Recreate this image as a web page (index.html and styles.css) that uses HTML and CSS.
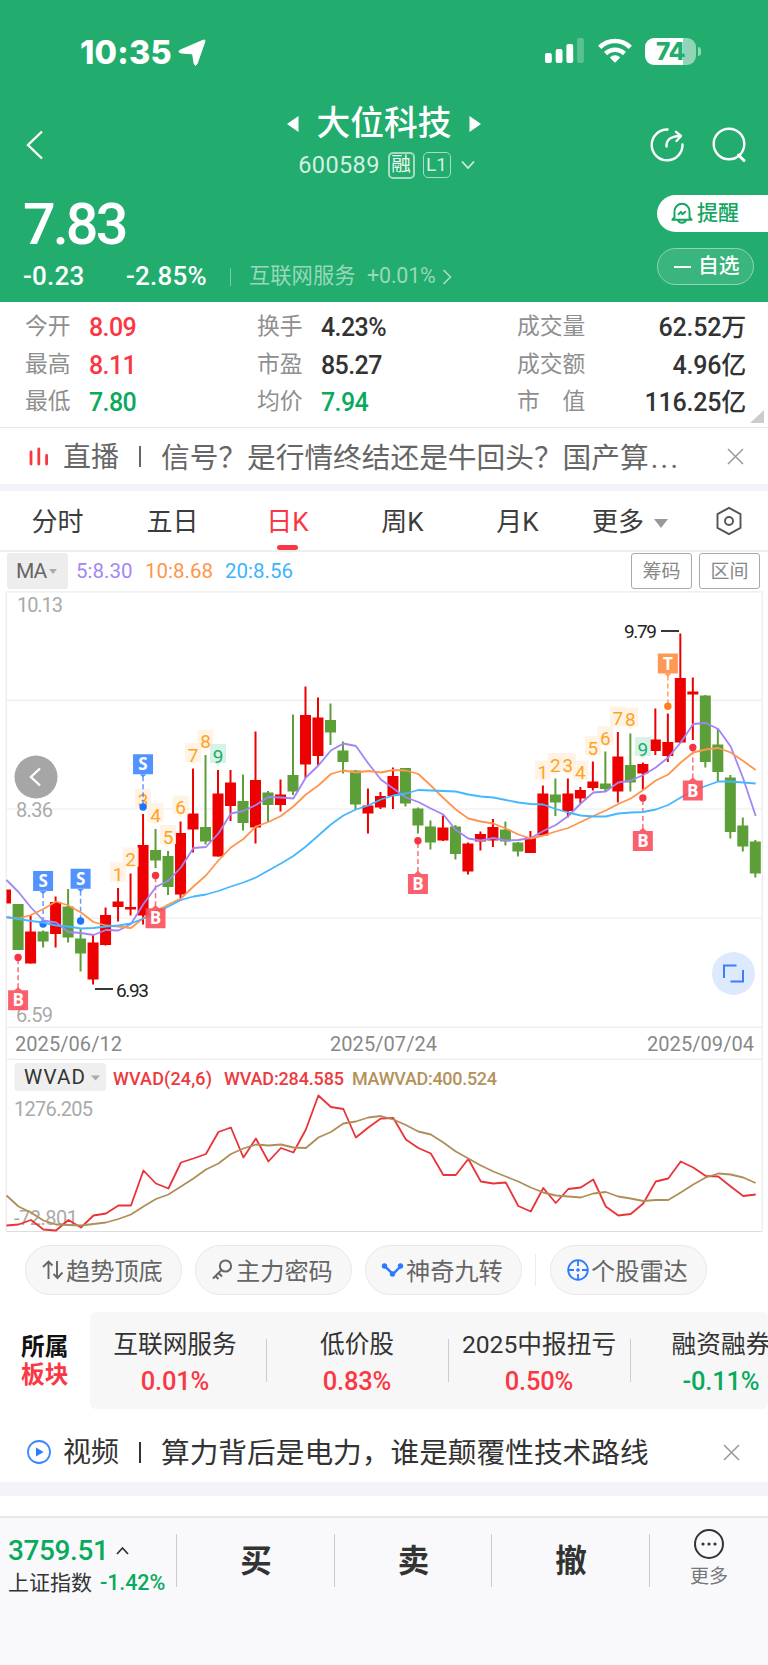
FILE: index.html
```html
<!DOCTYPE html>
<html lang="zh-CN">
<head>
<meta charset="utf-8">
<title>大位科技 600589</title>
<link rel="stylesheet" href="styles.css">
</head>
<body>
<header class="header">
  <div class="status">
    <span class="clock">10:35</span>
    <svg class="locate" width="28" height="28" viewBox="0 0 28 28"><path d="M25.2 1.200Q27.600.4 26.800 2.700L19 25Q17.600 27.800 16.200 25L14.600 14.900 2.800 13.900Q-.6 12.800 2 11.200Z" fill="#fff" stroke="#fff" stroke-width="1"/></svg>
    <svg class="signal" width="40" height="26" viewBox="0 0 40 26" fill="#fff"><rect x="0" y="15" width="6.8" height="10" rx="2"/><rect x="10.7" y="11" width="6.8" height="14" rx="2"/><rect x="21.4" y="6" width="6.8" height="19" rx="2"/><rect x="32.1" y="0" width="6.8" height="25" rx="2" opacity=".25"/></svg>
    <svg class="wifi" width="34" height="26" viewBox="0 0 34 26" fill="none" stroke="#fff" stroke-width="4.6"><path d="M1.7 9.4a21.6 21.6 0 0 1 30.6 0"/><path d="M7.6 15.6a13.3 13.3 0 0 1 18.8 0"/><path d="M17 24.8l-5.2-5.4a7.4 7.4 0 0 1 10.4 0z" fill="#fff" stroke="none"/></svg>
    <span class="battery"><span class="battery-level">74</span></span>
    <i class="battery-nub"></i>
  </div>
  <div class="nav">
    <svg class="back" width="20" height="32" viewBox="0 0 20 32"><path d="M17 2.5L3 16l14 13.5" fill="none" stroke="#fff" stroke-width="2.4"/></svg>
    <div class="title">
      <div class="title-name">
        <svg width="12" height="16" viewBox="0 0 12 16"><path d="M11.5 0v16L0 8z" fill="#fff"/></svg>
        <h1>大位科技</h1>
        <svg width="12" height="16" viewBox="0 0 12 16"><path d="M.5 0v16L12 8z" fill="#fff"/></svg>
      </div>
      <div class="title-code">
        <span>600589</span><b class="tag">融</b><b class="tag tag-level">L1</b>
        <svg width="14" height="10" viewBox="0 0 14 10"><path d="M1 1.5l6 6.5 6-6.5" fill="none" stroke="#d5f0e3" stroke-width="1.7"/></svg>
      </div>
    </div>
    <svg class="share" width="36" height="36" viewBox="0 0 36 36" fill="none" stroke="#fff" stroke-width="2.4" stroke-linecap="round" stroke-linejoin="round"><path d="M18.5 2.5A15.4 15.4 0 1 0 33.5 17.5"/><path d="M17.5 19.5c-.3-7 4-10 13.500-10.500"/><path d="M27 4.800l5 4.200-4.500 5"/></svg>
    <svg class="search" width="36" height="36" viewBox="0 0 36 36" fill="none" stroke="#fff" stroke-width="2.400" stroke-linecap="round"><circle cx="18" cy="17" r="15.300"/><path d="M27.500 28l5.500 5.500" stroke-width="3"/></svg>
  </div>
  <div class="quote">
    <div class="quote-left">
      <div class="price">7.83</div>
      <div class="change"><span class="chg-abs">-0.23</span><span class="chg-pct">-2.85%</span><i></i><span class="sector">互联网服务</span><span class="sector-pct">+0.01%</span>
        <svg width="10" height="16" viewBox="0 0 10 16"><path d="M1.500 1l7 7-7 7" fill="none" stroke="#a5dcc3" stroke-width="1.700"/></svg></div>
    </div>
    <div class="quote-actions">
      <div class="pill-alert"><svg width="22" height="23" viewBox="0 0 22 23" fill="none" stroke="#13a562" stroke-width="1.900" stroke-linejoin="round"><path d="M3.500 16.500V9.300a7.500 7.500 0 0 1 15 0v7.200M3.500 15L1.300 17.800h5.500q1.200 3 4.200 3t4.200-3h5.500L18.500 15M6.800 17.800h8.400"/><path d="M7 12.800l2.800-3 1.600 2.400 3.400-3"/></svg><span>提醒</span></div>
      <div class="pill-fav"><i></i><span>自选</span></div>
    </div>
  </div>
</header>

<section class="stats">
  <span class="k">今开</span><span class="v up">8.09</span><span class="k">换手</span><span class="v">4.23%</span><span class="k">成交量</span><span class="v end">62.52万</span>
  <span class="k">最高</span><span class="v up">8.11</span><span class="k">市盈</span><span class="v">85.27</span><span class="k">成交额</span><span class="v end">4.96亿</span>
  <span class="k">最低</span><span class="v down">7.80</span><span class="k">均价</span><span class="v down">7.94</span><span class="k">市　值</span><span class="v end">116.25亿</span>
  <i class="corner"></i>
</section>

<section class="notice live">
  <svg class="notice-icon" width="20" height="19" viewBox="0 0 20 19" stroke="#f93642" stroke-width="2.800" stroke-linecap="round"><path d="M2 5v12M9.800 2v15M17.600 8.500v8.500"/></svg>
  <span class="kind">直播</span><i class="bar"></i><span>信号？是行情终结还是牛回头？国产算<span class="dots">...</span></span>
  <svg class="close" width="17" height="17" viewBox="0 0 17 17"><path d="M1 1l15 15M16 1L1 16" stroke="#999" stroke-width="1.500"/></svg>
</section>

<nav class="tabs">
  <span>分时</span><span>五日</span><span class="active">日K</span><span>周K</span><span>月K</span>
  <span class="more">更多<i></i></span>
  <svg width="28" height="30" viewBox="0 0 28 30" fill="none" stroke="#555" stroke-width="1.900" stroke-linejoin="round"><path d="M14 1.800l11.500 6.300v13.800L14 28.200 2.500 21.900V8.100z"/><circle cx="14" cy="15" r="4"/></svg>
</nav>

<div class="ma-row">
  <span class="chip">MA<i></i></span>
  <span class="ma5">5:8.30</span><span class="ma10">10:8.68</span><span class="ma20">20:8.56</span>
  <span class="outline first">筹码</span><span class="outline">区间</span>
</div>

<svg id="chart" class="chart" width="768" height="643" viewBox="0 591 768 643"></svg>

<div class="tools">
  <span class="tool"><svg width="24" height="24" viewBox="0 0 24 24" fill="none" stroke="#666" stroke-width="1.900"><path d="M7.500 21V3.500M2 9l5.500-5.500 4 4M16 3v17M12.500 16l4 4 5-5.500"/></svg>趋势顶底</span>
  <span class="tool"><svg width="24" height="24" viewBox="0 0 24 24" fill="none" stroke="#666" stroke-width="2"><circle cx="14.500" cy="8" r="5.600"/><path d="M10.500 12L2 20.500M7.500 15l3.500 3.500M4.500 18l3 3"/></svg>主力密码</span>
  <span class="tool"><svg width="24" height="24" viewBox="0 0 24 24" fill="none" stroke="#2b7bff" stroke-width="2.400"><path d="M4 8.500l8 7.500 7.500-7.500"/><g fill="#2b7bff" stroke="none"><circle cx="3.500" cy="8" r="2.700"/><circle cx="11.500" cy="16" r="2.700"/><circle cx="19.500" cy="8" r="2.700"/></g></svg>神奇九转</span>
  <i class="tool-sep"></i>
  <span class="tool"><svg width="24" height="24" viewBox="0 0 24 24" fill="none" stroke="#2b7bff" stroke-width="1.800"><circle cx="12" cy="12" r="9.800"/><path d="M12 2v6M12 16v6M2 12h6M16 12h6"/><circle cx="12" cy="12" r="1.800" fill="#2b7bff" stroke="none"/></svg>个股雷达</span>
</div>

<section class="board">
  <div class="board-label"><b>所属</b><b class="up">板块</b></div>
  <div class="board-list">
    <div class="board-item"><span>互联网服务</span><strong class="up">0.01%</strong></div>
    <div class="board-item"><span>低价股</span><strong class="up">0.83%</strong></div>
    <div class="board-item"><span>2025中报扭亏</span><strong class="up">0.50%</strong></div>
    <div class="board-item"><span>融资融券</span><strong class="down">-0.11%</strong></div>
  </div>
</section>

<section class="notice video">
  <svg class="notice-icon" width="26" height="26" viewBox="0 0 26 26"><circle cx="13" cy="13" r="11" fill="none" stroke="#3c86ff" stroke-width="1.800"/><path d="M10 8.500l7.500 4.500-7.500 4.500z" fill="#2b7bff"/></svg>
  <span class="kind">视频</span><i class="bar"></i><span>算力背后是电力，谁是颠覆性技术路线</span>
  <svg class="close" width="17" height="17" viewBox="0 0 17 17"><path d="M1 1l15 15M16 1L1 16" stroke="#999" stroke-width="1.500"/></svg>
</section>

<footer class="footer">
  <div class="index">
    <div class="index-top">3759.51<svg width="13" height="9" viewBox="0 0 13 9"><path d="M1 8l5.500-6 5.500 6" fill="none" stroke="#333" stroke-width="1.800"/></svg></div>
    <div class="index-bottom">上证指数<em>-1.42%</em></div>
  </div>
  <b class="trade">买</b><b class="trade">卖</b><b class="trade">撤</b>
  <div class="footer-more"><svg width="32" height="32" viewBox="0 0 32 32"><circle cx="16" cy="16" r="14" fill="none" stroke="#333" stroke-width="2"/><g fill="#333"><circle cx="10" cy="16" r="1.600"/><circle cx="16" cy="16" r="1.600"/><circle cx="22" cy="16" r="1.600"/></g></svg><span>更多</span></div>
</footer>
<script src="chart.js"></script>
</body>
</html>
```
FILE: styles.css
```css
* { box-sizing: border-box; }
body { margin: 0; width: 768px; height: 1665px; overflow: hidden; background: #fff; color: #333; font-family: Roboto, "Noto Sans CJK SC", sans-serif; display: flex; flex-direction: column; }
body > * { flex: none; }
svg { display: block; flex: none; }
i, em { font-style: normal; }
.up { color: #fa3744; }
.down { color: #0aaa5c; }

.header { height: 302px; background: #22ac6e; color: #fff; }
.status { height: 105px; display: flex; align-items: center; padding-left: 80px; }
.clock { width: 98px; font: 800 32.500px/40px Inter, sans-serif; letter-spacing: .2px; }
.signal { margin-left: 339px; margin-top: -3px; }
.wifi { margin-left: 13px; margin-top: -3px; }
.battery { width: 51px; height: 27px; margin-left: 13px; margin-top: -3px; border-radius: 9px; overflow: hidden; background: linear-gradient(90deg, #fff 74%, #92d5b6 74%); }
.battery-level { display: block; text-align: center; font: 800 24.500px/27px Inter, sans-serif; color: #22ac6e; letter-spacing: -.5px; }
.battery-nub { width: 3px; height: 9px; margin: -3px 0 0 2px; border-radius: 0 3px 3px 0; background: #92d5b6; }

.nav { height: 82px; display: flex; align-items: flex-start; }
.back { margin: 24px 0 0 25px; }
.title { width: 420px; margin-left: 129px; }
.title-name { height: 38px; display: flex; align-items: center; justify-content: center; gap: 18px; }
.title-name h1 { margin: 0; font-size: 33.700px; line-height: 38px; font-weight: 500; }
.title-code { height: 28px; margin-top: 8px; padding-left: 5px; display: flex; align-items: center; justify-content: center; font-size: 23.500px; color: #d5f0e3; }
.title-code span { letter-spacing: .4px; }
.tag { margin-left: 8px; width: 27px; height: 27px; border: 2px solid #a5dcc3; border-radius: 5px; font-size: 19.500px; line-height: 22px; font-weight: 400; text-align: center; color: #f0faf5; text-indent: -.5px; }
.tag-level { width: 28px; height: 26px; border-width: 1.500px; font-size: 19px; line-height: 24px; color: #d5f0e3; }
.title-code svg { margin-left: 10px; }
.share { margin: 22px 0 0 55px; }
.search { margin: 22px 0 0 26px; }

.quote { height: 115px; display: flex; justify-content: space-between; }
.quote-left { padding-left: 23px; }
.price { height: 73px; font-size: 57.500px; line-height: 75px; font-weight: 500; letter-spacing: -2.900px; }
.change { height: 34px; display: flex; align-items: center; font-size: 26px; line-height: 32px; font-weight: 500; }
.change span { height: 34px; }
.chg-abs { width: 103px; letter-spacing: .2px; }
.chg-pct { width: 104px; letter-spacing: .2px; }
.change i { width: 1px; height: 18px; background: #7bcba8; }
.change .sector { margin-left: 18px; width: 118px; font-size: 21.300px; font-weight: 400; color: #98d8bb; }
.change .sector-pct { width: 75px; font-size: 21.500px; font-weight: 400; color: #98d8bb; letter-spacing: -.2px; }
.quote-actions { width: 111px; padding-top: 8px; display: flex; flex-direction: column; gap: 16px; }
.pill-alert { height: 37px; display: flex; align-items: center; padding: 0 0 1px 14px; background: #fff; color: #13a562; border-radius: 19px 0 0 19px; font-size: 21px; font-weight: 500; }
.pill-alert span { margin-left: 4px; line-height: 30px; padding-bottom: 1px; }
.pill-fav { width: 97px; height: 37px; display: flex; align-items: center; padding-left: 16px; border: 1px solid #90d5b5; border-radius: 19px; background: #39b57d; font-size: 20.800px; font-weight: 500; }
.pill-fav i { width: 17px; height: 2px; margin-right: 7px; background: #fff; }
.pill-fav span { line-height: 30px; padding-bottom: 2px; }

.stats { position: relative; height: 126px; padding: 6px 22px 0 25px; border-bottom: 1px solid #e8e8e8; display: grid; grid-template-columns: 64px 168px 64px 196px 80px 1fr; grid-template-rows: repeat(3, 37.500px); line-height: 37.500px; }
.k { font-size: 22.800px; color: #8f8f8f; white-space: nowrap; }
.v { font-size: 25px; font-weight: 500; letter-spacing: -.6px; padding-top: 1px; white-space: nowrap; }
.end { text-align: right; letter-spacing: -.2px; }
.corner { position: absolute; right: 4px; bottom: 4px; border-left: 14px solid transparent; border-bottom: 13px solid #ccc; }

.notice { display: flex; align-items: center; font-size: 28.700px; line-height: 40px; white-space: nowrap; }
.notice .kind { width: 76px; font-size: 28px; }
.notice .bar { width: 2px; height: 21px; background: currentColor; }
.notice .bar + span { margin-left: 20px; }
.dots { letter-spacing: 2.300px; margin-left: 2px; }
.notice .close { margin-left: auto; }
.live { height: 56px; color: #666; padding: 0 24px 0 29px; }
.live > span { padding-top: 3px; }
.live .kind { margin-left: 14px; }
.video { height: 60px; margin-top: 13px; padding: 0 28px 0 26px; }
.video > span { padding-top: 2px; }
.video .kind { margin-left: 11px; }

.tabs { height: 68px; border-top: 7px solid #f2f4f9; border-bottom: 2px solid #eee; display: flex; align-items: center; font-size: 26px; color: #3d3d3d; }
.tabs > span { position: relative; width: 115px; height: 59px; text-align: center; line-height: 62px; white-space: nowrap; }
.tabs .active { color: #fa3744; }
.tabs .active::after { content: ""; position: absolute; left: 47px; bottom: 0; width: 21px; height: 5px; border-radius: 2.500px; background: #fa3744; }
.tabs .more { width: 123px; margin-left: 17px; text-align: left; }
.more i { display: inline-block; margin: 0 0 3px 10px; border: 7px solid transparent; border-top: 9px solid #999; border-bottom: 0; }

.ma-row { height: 39px; padding: 1px 8px 2px 7px; display: flex; align-items: center; font-size: 20.500px; white-space: nowrap; }
.chip { width: 61px; height: 36px; margin-right: 8px; padding-left: 9px; background: #ededed; border-radius: 3px; font-size: 21px; line-height: 36px; color: #666; letter-spacing: -1px; }
.chip i { display: inline-block; margin: 0 0 4px 3px; border: 4.500px solid transparent; border-top: 5.500px solid #aaa; border-bottom: 0; }
.ma5 { width: 69px; color: #a685f5; }
.ma10 { width: 80px; color: #ff964b; }
.ma20 { color: #3fb4fb; }
.outline { width: 61px; height: 36px; margin-left: 7px; border: 1px solid #aaa; border-radius: 3px; text-align: center; line-height: 36px; font-size: 19px; color: #888; }
.outline.first { margin-left: auto; }

.chart { font-family: Roboto, sans-serif; }
.chart .axis { fill: #aaa; font-size: 20px; }
.chart .date { fill: #888; font-size: 20px; }
.chart .count { font-size: 19px; text-anchor: middle; }
.chart .flag { font: 700 17px "Open Sans", sans-serif; text-anchor: middle; fill: #fff; }
.chart .extreme { font-size: 19px; fill: #222; }
.chart .legend { font-size: 18px; font-weight: 500; }
.chart .wvad { font-size: 20.500px; fill: #333; }

.tools { height: 61px; padding: 11px 0 0 25px; display: flex; }
.tool { width: 157px; height: 50px; margin-right: 13px; padding: 0 0 1px 15px; display: flex; align-items: center; border: 1px solid #e8e8e8; border-radius: 25px; background: #f7f7f7; font-size: 24.200px; color: #666; white-space: nowrap; }
.tool svg { margin-right: 1px; }
.tool-sep { width: 1px; height: 32px; margin: 9px 14px 0 0; background: #ececec; }

.board { height: 97px; margin-top: 17px; display: flex; }
.board-label { width: 90px; padding: 21px 0 0 21px; display: flex; flex-direction: column; font-size: 23.700px; line-height: 28px; color: #111; }
.board-label .up { color: #fa3744; }
.board-list { width: 678px; height: 97px; overflow: hidden; display: flex; border-radius: 6px; background: #f7f7f7; }
.board-item { flex: none; width: 182px; padding-top: 13px; text-align: center; }
.board-item + .board-item { background: linear-gradient(#ccc, #ccc) 0 27px / 1px 43px no-repeat; }
.board-item:first-child { margin-left: -6px; }
.board-item span { display: block; font-size: 24.700px; line-height: 39px; white-space: nowrap; }
.board-item strong { display: block; font-size: 25.500px; font-weight: 500; line-height: 34px; letter-spacing: -.2px; }

.footer { height: 183px; border-top: 14px solid #f2f4f9; display: grid; grid-template-columns: 177px 158px 157px 158px 118px; grid-template-rows: 1fr; background: linear-gradient(#fff 20px, #e7e7e9 20px, #e7e7e9 22px, #f9f9fc 22px); }
.index { padding: 37px 0 0 8px; background: linear-gradient(#ccc, #ccc) 176px 38px / 1px 53px no-repeat; }
.index-top { display: flex; align-items: center; height: 34px; font-size: 28px; font-weight: 500; letter-spacing: -.4px; color: #0aaa5c; }
.index-top svg { margin-left: 8px; }
.index-bottom { height: 32px; font-size: 21px; line-height: 32px; white-space: nowrap; }
.index-bottom em { margin-left: 8px; font-weight: 500; font-size: 21.500px; letter-spacing: -.1px; color: #0aaa5c; }
.trade { text-align: center; font-size: 31.500px; line-height: 132px; background: linear-gradient(#ccc, #ccc) right 38px / 1px 53px no-repeat; }
.footer-more { padding-top: 32px; display: flex; flex-direction: column; align-items: center; color: #777; font-size: 19px; line-height: 34px; }
```
FILE: chart.js
```js
// Horizontal centre of the i-th trading day
const X = i => 18.1 + 12.495 * i;
const RED = '#ed0000', GREEN = '#5c9e38';
const out = [];
const add = s => out.push(s);
const line = (x1, y1, x2, y2, c, w, extra = '') =>
  add(`<line x1="${x1}" y1="${y1}" x2="${x2}" y2="${y2}" stroke="${c}" stroke-width="${w}" ${extra}/>`);
const text = (x, y, s, cls, len, extra = '') =>
  add(`<text x="${x}" y="${y}" class="${cls}" ${len ? `textLength="${len}"` : ''} ${extra}>${s}</text>`);

[591.8, 700.3, 809, 918, 1027.3, 1059.3, 1231.5].forEach(y => line(6, y, 763, y, y > 1200 ? '#ddd' : '#ececec', 1.2));
line(6.3, 592, 6.3, 1232, '#eee', 1.4);
line(762.3, 592, 762.3, 1232, '#eee', 1.4);

text(17, 612, '10.13', 'axis', 46);
text(16, 817, '8.36', 'axis', 37);
text(16, 1021.5, '6.59', 'axis', 37);
text(14, 1115.5, '1276.205', 'axis', 79);
text(14, 1225, '-72.801', 'axis', 64);
text(15, 1051, '2025/06/12', 'date', 107);
text(330, 1051, '2025/07/24', 'date', 107);
text(647, 1051, '2025/09/04', 'date', 107);

// Daily bars: [colour, high, body top, body bottom, low]
const days = [
  'g 904 904 950 950', 'r 915 931.5 963.5 963.5', 'g 930.5 931.5 941.5 947.5', 'r 896.5 902 934 947.5', 'g 889 906.5 937.5 942.5',
  'g 929 938.5 953.5 971.5', 'r 935 942.5 979.5 984.5', 'r 907.5 915 945 945.5', 'r 888 901.5 907 921.5', 'r 873.5 907 909.5 915.5',
  'r 814 845 915.5 924.5', 'g 829 850 860.5 868', 'g 851 856 887 895', 'r 821.5 833 894.5 898', 'r 768.5 813.5 829.5 852.5',
  'g 755 827 841.500 844.5', 'r 770 793.5 856.5 856.5', 'r 770 782.5 806 821', 'g 774.5 801 823 830.5', 'r 731.5 780 827.5 843.5',
  'g 791 792.5 805 822', 'r 779.5 794.5 805 811.5', 'g 714.5 775 791.5 795', 'r 686.5 715 764.5 778', 'r 697.5 717.5 756 765',
  'g 703.5 720 732.5 745', 'g 741.5 750.5 762 773.5', 'g 770 770.5 804.5 809.5', 'r 788.5 805.5 813.5 833.5', 'r 792 796 807.5 809',
  'r 767.5 776 796 809', 'g 768 768 803.5 806.5', 'g 807.5 808.5 825.5 833.5', 'g 820.5 826.5 842.5 849.5', 'r 815.5 827.5 840.5 841',
  'g 825 826.5 854 859.5', 'r 842.5 843.5 871.5 874.5', 'r 831.5 834 841.5 850.5', 'r 819 827 840.5 847', 'g 821.5 829.5 841.5 845.5',
  'g 842 842.5 851.5 856.5', 'r 831 837.5 853 853', 'r 785.5 793.5 835.5 836', 'g 778.5 794.5 802.5 816', 'r 778.5 793.5 811 817.5',
  'r 787 790 798.5 803.5', 'r 761.5 781.5 788 790.5', 'g 751.5 783.5 789 791', 'r 732 756.5 791.5 802.5', 'g 733.5 765 782.5 791.5',
  'r 762.5 764 773.5 789.5', 'r 708.5 739.5 751 755', 'r 713.5 742 756 762', 'r 633.5 678 742.5 743', 'r 677.5 691.5 694.5 740',
  'g 695 695.5 762 767.5', 'g 728.5 744.5 772 782', 'g 775 777.5 832 838.5', 'g 817.5 825.5 846.5 851.5', 'g 840 841.5 873.5 877.5'
];
add(`<rect x="6.5" y="889.5" width="4.5" height="14" fill="${RED}"/>`);
days.forEach((d, i) => {
  const [k, hi, top, bot, lo] = d.split(' ');
  const c = k === 'r' ? RED : GREEN;
  line(X(i), hi, X(i), lo, c, 2);
  add(`<rect x="${X(i) - 5.5}" y="${top}" width="11" height="${bot - top}" fill="${c}"/>`);
});

// Sequence numbers above bars: [day, baseline, digit]
[[8, 881, 1], [9, 866, 2], [10, 807, 3], [11, 821.5, 4], [12, 843.5, 5], [13, 814, 6], [14, 761.5, 7], [15, 748, 8], [16, 762.5, 9],
 [42, 779, 1], [43, 771.5, 2], [44, 771.5, 3], [45, 779, 4], [46, 754.5, 5], [47, 744.5, 6], [48, 725, 7], [49, 726, 8], [50, 755.5, 9]
].forEach(([i, y, n]) => {
  const x = X(i), bg = n === 9 ? '#d5f1e4' : '#fff2e3';
  add(`<path d="M${x - 8} ${y - 18.5}h16v19h-5l-3 3-3-3h-5z" fill="${bg}" opacity=".9"/>`);
  text(x, y, n, 'count', 0, `fill="${n === 9 ? '#1aae6c' : '#ffa321'}"`);
});

// Trade flags: [day, letter, box top, dot y]
const flagColour = { B: '#fa4b58', S: '#3a84ff', T: '#ff8a3c' };
const dotColour = { B: '#f93442', S: '#1f74ff', T: '#ff7d1c' };
const flags = [[0, 'B', 990.3, 957.5], [2, 'S', 871, 924], [5, 'S', 868.7, 921], [10, 'S', 754.3, 807], [11, 'B', 908.3, 875.5],
 [32, 'B', 874, 840.8], [50, 'B', 831, 798], [54, 'B', 780.5, 747.5], [52, 'T', 653.5, 706.3]];
flags.forEach(([i, t, y, dot]) => {
  const x = X(i);
  line(x, t === 'B' ? y - 2 : y + 22, x, dot, dotColour[t], 1.5, 'stroke-dasharray="5 3" opacity=".7"');
  add(`<circle cx="${x}" cy="${dot}" r="3.7" fill="${dotColour[t]}"/>`);
});

// Poly-line with one value at the left edge followed by one per day
const series = (vals, c) => {
  const p = vals.trim().split(/\s+/).map((v, i) => `${i ? X(i - 1) + 0.4 : 6.500},${v}`).join(' ');
  add(`<polyline points="${p}" fill="none" stroke="${c}" stroke-width="1.8" stroke-linejoin="round"/>`);
};
series(`880 892 907.5 920.5 922.5 932 933 935 930 930.5 924 904 887 880.5 867.5 848 847 833.5 813.5 811 805
  797 797.5 798.5 777.5 765.5 750.5 743.5 746 763.5 779.5 788.5 797.5 802 808.5 814.5 830 838.5 840.5 838 840.5
  840 838 831 825 816 803.5 792.5 791.5 782.5 780.5 775 767.5 757.5 742.5 724 723 729 746.5 778.5 816`, '#a384f5');
series(`917.5 918.5 915 909 901.5 905.5 912.5 922 925.5 926.5 928 918 911 904.5 898.5 886.5 875.5 860.5 847.5 839 826.5
  822 816 806.5 794.5 785.5 774 770.5 772.5 771 772.5 770 770.5 774 785.5 798 809.5 818.5 821.5 823.5 828.5
  834.5 838.5 835.5 831.5 828 822 816 810.5 804 798.5 790 780.5 774.5 762.5 752.5 749.5 748 752.5 761 770`, '#ff964f');
series(`917 919 921 922.5 925.5 926.5 928.5 928 926.5 925.5 923.5 918.5 912.5 906.5 900 896.5 894.5 891 886.5 882.5 877.5
  870.5 863.5 856 846.5 835.5 824.5 815.5 809.5 805.5 799.5 795.5 793.5 790 790.5 791 791.5 794.5 796.5 797.5 800
  802.5 804 804.5 809 812.5 815.5 816.5 816.5 813.5 812.5 812 809.5 805 797.5 790.5 786 781.5 781.5 782.5 783.5`, '#44b7ff');

flags.forEach(([i, t, y]) => {
  const x = X(i);
  const tip = t === 'B' ? `M${x - 4} ${y + 0.3}l4-3.300 4 3.300z` : `M${x - 4} ${y + 19.7}l4 3.300 4-3.300z`;
  add(`<path d="M${x - 10} ${y}h20v20h-20z${tip}" fill="${flagColour[t]}" opacity=".88"/>`);
  text(x, y + 16, t, 'flag');
});

text(624, 637.5, '9.79', 'extreme', 33);
line(661, 631, 679, 631, '#222', 1.8);
text(116, 996.5, '6.93', 'extreme', 33);
line(95, 989, 113, 989, '#222', 1.8);

add('<circle cx="36" cy="777" r="21.5" fill="#a6a6a6"/><path d="M40 768.500l-9 8.500 9 8.500" fill="none" stroke="#fff" stroke-width="2.4"/>');
add('<circle cx="733.5" cy="973.5" r="21.5" fill="#dde9fd"/><path d="M724 978v-12.500h12.500M743 970v11.500h-12.500" fill="none" stroke="#3c7ff5" stroke-width="2"/>');

// WVAD indicator pane
add('<rect x="14.5" y="1063" width="91.500" height="28" rx="3" fill="#efefef"/>');
text(24, 1084, 'WVAD', 'wvad', 61);
add('<path d="M91 1075.500h9l-4.500 5z" fill="#aaa"/>');
text(113, 1084.5, 'WVAD(24,6)', 'legend', 99, 'fill="#ec3a3f"');
text(224, 1084.5, 'WVAD:284.585', 'legend', 120, 'fill="#ec3a3f"');
text(352, 1084.5, 'MAWVAD:400.524', 'legend', 145, 'fill="#b5915a"');
series(`1225.5 1224.5 1220 1229.5 1230.5 1220 1227.5 1215.5 1213.5 1205.5 1205.5 1170.5 1183.5 1188.5 1162.5 1158.5 1154 1132 1127.5 1157.5 1138.5
  1161.5 1148 1152.5 1129.5 1095.5 1107 1109 1137.5 1127.5 1118.5 1118 1139.5 1148 1153.5 1175 1175 1159 1181.5 1183.5 1182.5
  1206 1211.5 1188 1203 1189 1187.5 1179.5 1206.5 1215.5 1214 1203.5 1181.5 1178.5 1161.5 1167.5 1176 1176.5 1186.5 1196 1194.5`, '#ea3338');
series(`1195.5 1206.5 1212.5 1220.5 1224.5 1225 1225.5 1224 1222.5 1219 1214.5 1206.5 1199 1194.5 1186.5 1178.5 1169.5 1163.5 1154 1148.5 1144.5
  1145.5 1144.5 1147.5 1148 1137.5 1132 1123.5 1121.5 1117.5 1116 1119.5 1125 1131.5 1134.5 1142.5 1151.5 1158.5 1165.5 1171.5 1176.5
  1181.5 1187.5 1192.5 1195.5 1196.5 1197.5 1193.5 1192 1196.5 1198.5 1201 1200 1200 1192.5 1184.5 1177.5 1173.5 1174.5 1177.5 1183`, '#b08e58');

document.getElementById('chart').innerHTML = out.join('');
```
